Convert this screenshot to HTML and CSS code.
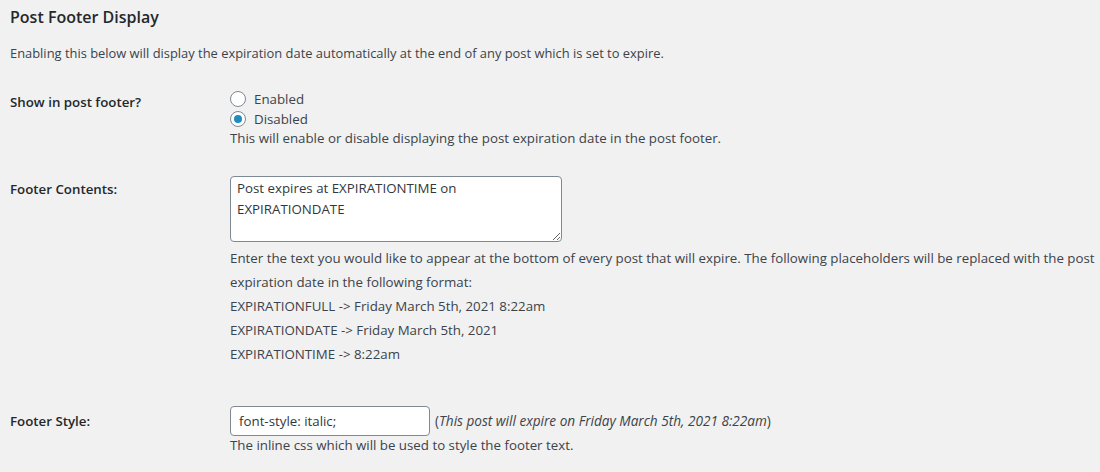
FILE: index.html
```html
<!DOCTYPE html>
<html>
  <head>
    <meta charset="utf-8">
    <link rel="stylesheet" href="styles.css">
  </head>
  <body>
    <div class="wrap">
      <h2>Post Footer Display</h2>
      <p class="intro">Enabling this below will display the expiration date automatically at the end of any post which is set to expire.</p>
      <table class="form-table">
        <tbody>
          <tr>
            <th>Show in post footer?</th>
            <td>
              <label class="radio"><input type="radio" name="footer_display" value="1" /> Enabled</label>
              <label class="radio"><input type="radio" name="footer_display" value="0" checked /> Disabled</label>
              <p class="description">This will enable or disable displaying the post expiration date in the post footer.</p>
            </td>
          </tr>
          <tr>
            <th>Footer Contents:</th>
            <td>
              <textarea class="footer-contents" rows="3">Post expires at EXPIRATIONTIME on EXPIRATIONDATE</textarea>
              <p class="description tall">Enter the text you would like to appear at the bottom of every post that will expire. The following placeholders will be replaced with the post expiration date in the following format:</p>
              <p class="placeholders">
                EXPIRATIONFULL -&gt; Friday March 5th, 2021 8:22am<br />
                EXPIRATIONDATE -&gt; Friday March 5th, 2021<br />
                EXPIRATIONTIME -&gt; 8:22am
              </p>
            </td>
          </tr>
          <tr>
            <th class="input-label">Footer Style:</th>
            <td>
              <div class="style-row">
                <input type="text" class="footer-style" value="font-style: italic;" />
                <span class="preview">(<em>This post will expire on Friday March 5th, 2021 8:22am</em>)</span>
              </div>
              <p class="description">The inline css which will be used to style the footer text.</p>
            </td>
          </tr>
        </tbody>
      </table>
    </div>
  </body>
</html>
```

FILE: styles.css
```css
html,
body {
  margin: 0;
  background: #f1f1f1;
}

body {
  font-family: "Segoe UI", "Open Sans", "Noto Sans", sans-serif;
  font-size: 13.3px;
  line-height: 1.4;
  color: #3c434a;
}

.wrap {
  padding: 0 0 0 10px;
}

h2 {
  margin: 0;
  padding-top: 6px;
  font-size: 16px;
  font-weight: 600;
  line-height: 22px;
  color: #23282d;
}

.intro {
  margin: 15px 0 0;
  font-size: 12.9px;
  line-height: 20px;
}

.form-table {
  border-collapse: collapse;
  margin-top: 11px;
  width: 100%;
}

.form-table th {
  width: 200px;
  padding: 20px 10px 20px 0;
  text-align: left;
  vertical-align: top;
  font-weight: 600;
  line-height: 1.3;
  color: #23282d;
}

.form-table th.input-label {
  padding-top: 22px;
}

.form-table td {
  padding: 15px 0 14px 10px;
  vertical-align: top;
}

.radio {
  display: flex;
  align-items: center;
  line-height: 20px;
}

.radio input {
  appearance: none;
  width: 16px;
  height: 16px;
  margin: 0 8px 0 0;
  border: 1px solid #7e8993;
  border-radius: 50%;
  background: #fff;
  display: inline-flex;
  align-items: center;
  justify-content: center;
}

.radio input:checked::before {
  content: "";
  width: 8px;
  height: 8px;
  border-radius: 50%;
  background: #1e8cbe;
}

.description {
  margin: 0;
  line-height: 18px;
}

.description.tall {
  margin-top: 4px;
  line-height: 24px;
}

textarea,
input[type="text"] {
  font: inherit;
  color: #32373c;
  background: #fff;
  border: 1px solid #7e8993;
  border-radius: 4px;
  box-sizing: border-box;
}

.footer-contents {
  display: block;
  width: 332px;
  height: 66px;
  padding: 1px 6px;
  line-height: 21px;
}

.placeholders {
  margin: 0 0 11px;
  line-height: 24px;
}

.style-row {
  display: flex;
  align-items: center;
  gap: 5px;
}

.footer-style {
  width: 200px;
  height: 30px;
  padding: 0 8px;
  margin: 0;
}

.preview {
  font-size: 13.6px;
}

.preview em {
  font-style: italic;
}
```
